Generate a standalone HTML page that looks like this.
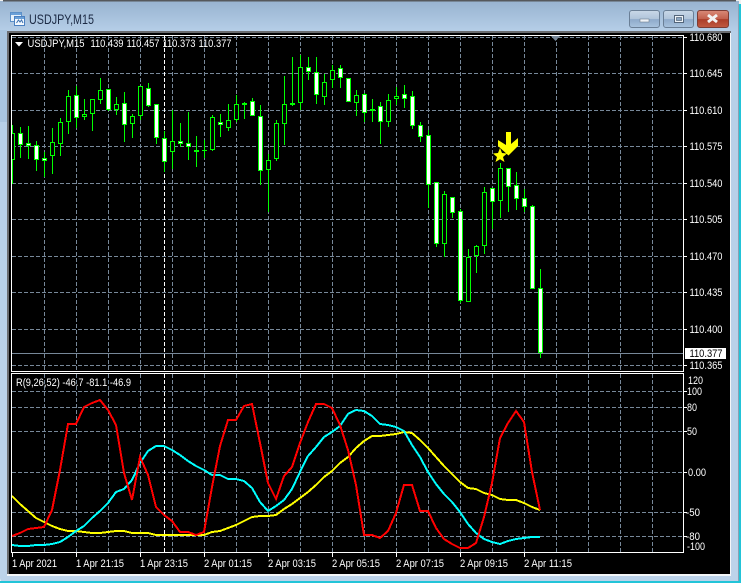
<!DOCTYPE html>
<html><head><meta charset="utf-8"><title>USDJPY,M15</title>
<style>
html,body{margin:0;padding:0;width:741px;height:583px;overflow:hidden;background:#fff}
svg{display:block}
text{font-family:"Liberation Sans",sans-serif;font-size:11px;fill:#fff}
</style></head><body>
<svg width="741" height="583" viewBox="0 0 741 583" xmlns="http://www.w3.org/2000/svg">
<defs>
<linearGradient id="t" x1="0" y1="0" x2="0" y2="1"><stop offset="0" stop-color="#98b3d0"/><stop offset="1" stop-color="#b6cfe8"/></linearGradient>
<linearGradient id="s" x1="0" y1="0" x2="0" y2="1"><stop offset="0" stop-color="#b6cfe8"/><stop offset="1" stop-color="#bcd3ea"/></linearGradient>
<linearGradient id="b" x1="0" y1="0" x2="0" y2="1"><stop offset="0" stop-color="#c9d8e8"/><stop offset=".5" stop-color="#afc4da"/><stop offset=".52" stop-color="#8eaaca"/><stop offset="1" stop-color="#a9c3de"/></linearGradient>
<linearGradient id="r" x1="0" y1="0" x2="0" y2="1"><stop offset="0" stop-color="#d98a78"/><stop offset=".5" stop-color="#c2604c"/><stop offset=".52" stop-color="#ab3c28"/><stop offset="1" stop-color="#c05a42"/></linearGradient>
<clipPath id="mc"><rect x="12" y="36" width="671" height="335"/></clipPath>
</defs>

<!-- window frame -->
<rect width="741" height="583" fill="#f0f0f0"/>
<rect x="0" y="1" width="739" height="581" rx="4" fill="url(#s)"/>
<rect x="0" y="1" width="739" height="31" fill="url(#t)"/>
<rect x="3" y="0" width="733" height="1.5" fill="#55585c"/>
<rect x="738" y="4" width="1" height="578" fill="#8aa0b4"/>
<rect x="739" y="4" width="2" height="579" fill="#22c4d8"/>
<rect x="0" y="581" width="741" height="2" fill="#22c4d8"/>
<rect x="0" y="30" width="7" height="92" fill="#a9c5e0"/>

<!-- icon -->
<g shape-rendering="crispEdges">
<rect x="10.500" y="12.500" width="11" height="9" fill="#e8f2fb" stroke="#5c90c8"/>
<rect x="11" y="13" width="10" height="2" fill="#6aa0d8"/>
<rect x="14.500" y="16.500" width="10" height="9" fill="#f4f9fe" stroke="#4a80c0"/>
<rect x="15" y="17" width="9" height="2" fill="#6aa0d8"/>
</g>
<path d="M16.500 23l2-3 1.500 2 1.500-2 1.500 3" fill="none" stroke="#3a70b0"/>

<text x="29" y="24" style="font-size:13.500px;fill:#1c2a44" textLength="65" lengthAdjust="spacingAndGlyphs">USDJPY,M15</text>

<!-- window buttons -->
<rect x="629.500" y="10.500" width="30" height="17" rx="2.500" fill="url(#b)" stroke="#6a7f96"/>
<rect x="640" y="19" width="9" height="3" fill="#eef3f8" stroke="#6e7f90" stroke-width=".6"/>
<rect x="663.500" y="10.500" width="30" height="17" rx="2.500" fill="url(#b)" stroke="#6a7f96"/>
<rect x="674.500" y="15.500" width="9" height="7" fill="#eef3f8" stroke="#53657a" />
<rect x="676.500" y="17.500" width="5" height="3" fill="#8ba6c2" stroke="#53657a" stroke-width=".7"/>
<rect x="697.500" y="10.500" width="31" height="17" rx="2.500" fill="url(#r)" stroke="#7c3c34"/>
<path d="M708 15l9 7m0-7l-9 7" stroke="#f2f2f2" stroke-width="3" fill="none"/>

<!-- client -->
<rect x="7" y="31" width="724" height="2" fill="#6a6c70"/>
<rect x="7" y="31" width="2" height="544" fill="#6a6c70"/>
<rect x="9" y="33" width="721" height="541" fill="#000"/>
<rect x="7" y="574" width="724" height="2" fill="#f4f6f8"/>
<rect x="730" y="33" width="1" height="543" fill="#f4f6f8"/>

<!-- grid -->
<g fill="none" stroke="#778899" stroke-dasharray="4 2" shape-rendering="crispEdges">
<path d="M12 37.500H683M12 73.500H683M12 110.500H683M12 146.500H683M12 183.500H683M12 219.500H683M12 256.500H683M12 292.500H683M12 329.500H683M12 365.500H683"/>
<path d="M44.500 36V371M76.500 36V371M108.500 36V371M140.500 36V371M172.500 36V371M204.500 36V371M236.500 36V371M268.500 36V371M300.500 36V371M332.500 36V371M364.500 36V371M396.500 36V371M428.500 36V371M460.500 36V371M492.500 36V371M524.500 36V371M556.500 36V371M588.500 36V371M620.500 36V371M652.500 36V371"/>
<path d="M12 391.500H683M12 407.500H683M12 431.500H683M12 472.500H683M12 512.500H683M12 536.500H683"/>
<path d="M44.500 374V552M76.500 374V552M108.500 374V552M140.500 374V552M172.500 374V552M204.500 374V552M236.500 374V552M268.500 374V552M300.500 374V552M332.500 374V552M364.500 374V552M396.500 374V552M428.500 374V552M460.500 374V552M492.500 374V552M524.500 374V552M556.500 374V552M588.500 374V552M620.500 374V552M652.500 374V552"/>
<path d="M164.500 36V371M164.500 374V552" stroke="#fff"/>
</g>

<!-- bid line -->
<rect x="12" y="353" width="671" height="1" fill="#778899"/>

<!-- candles -->
<g clip-path="url(#mc)" shape-rendering="crispEdges">
<path fill="none" stroke="#00ff00" d="M12.500 125V184M20.500 127V158M28.500 126V159M36.500 141V171M44.500 152V177M52.500 128V174M60.500 118V156M68.500 90V134M76.500 86V128M84.500 99V120M92.500 99V131M100.500 78V104M108.500 89V111M116.500 97V115M124.500 92V142M132.500 114V138M140.500 86V120M148.500 83V107M156.500 104V144M164.500 131V172M172.500 110V169M180.500 123V147M188.500 112V160M196.500 136V167M204.500 140V158M212.500 115V151M220.500 114V137M228.500 104V131M236.500 95V122M244.500 102V119M252.500 98V116M260.500 105V185M268.500 154V212M276.500 120V161M284.500 76V145M292.500 57V106M300.500 55V110M308.500 57V80M316.500 57V104M324.500 74V105M332.500 65V88M340.500 65V88M348.500 78V102M356.500 90V116M364.500 93V122M372.500 99V122M380.500 102V144M388.500 94V127M396.500 87V105M404.500 85V108M412.500 91V129M420.500 122V142M428.500 130V208M436.500 182V247M444.500 191V257M452.500 197V218M460.500 209V303M468.500 249V302M476.500 245V273M484.500 187V254M492.500 188V229M500.500 163V218M508.500 168V212M516.500 172V210M524.500 189V212M532.500 205V289M540.500 269V358"/>
<!-- hollow -->
<path fill="#000" stroke="#00ff00" d="M10.500 133.500h4V159.500h-4zM50.500 142.500h4V155.500h-4zM58.500 122.500h4V143.500h-4zM66.500 96.500h4V121.500h-4zM82.500 114.500h4V116.500h-4zM90.500 99.500h4V113.500h-4zM98.500 90.500h4V99.500h-4zM114.500 104.500h4V109.500h-4zM130.500 116.500h4V123.500h-4zM138.500 86.500h4V115.500h-4zM170.500 141.500h4V151.500h-4zM210.500 117.500h4V149.500h-4zM226.500 120.500h4V127.500h-4zM234.500 104.500h4V119.500h-4zM266.500 160.500h4V169.500h-4zM274.500 123.500h4V158.500h-4zM282.500 104.500h4V123.500h-4zM298.500 67.500h4V102.500h-4zM322.500 82.500h4V96.500h-4zM330.500 70.500h4V79.500h-4zM354.500 95.500h4V102.500h-4zM370.500 109.500h4V110.500h-4zM386.500 100.500h4V121.500h-4zM394.500 96.500h4V98.500h-4zM442.500 194.500h4V243.500h-4zM466.500 257.500h4V301.500h-4zM474.500 246.500h4V255.500h-4zM482.500 192.500h4V245.500h-4zM498.500 168.500h4V200.500h-4z"/>
<!-- white -->
<path fill="#fff" stroke="#00ff00" d="M18.500 133.500h4V144.500h-4zM26.500 143.500h4V145.500h-4zM34.500 145.500h4V159.500h-4zM42.500 158.500h4V160.500h-4zM74.500 95.500h4V117.500h-4zM106.500 89.500h4V109.500h-4zM122.500 103.500h4V124.500h-4zM146.500 88.500h4V105.500h-4zM154.500 104.500h4V137.500h-4zM162.500 138.500h4V161.500h-4zM178.500 141.500h4V143.500h-4zM186.500 143.500h4V146.500h-4zM218.500 122.500h4V124.500h-4zM250.500 101.500h4V115.500h-4zM258.500 116.500h4V170.500h-4zM306.500 67.500h4V71.500h-4zM314.500 72.500h4V94.500h-4zM338.500 68.500h4V77.500h-4zM346.500 78.500h4V101.500h-4zM362.500 94.500h4V112.500h-4zM378.500 106.500h4V121.500h-4zM402.500 94.500h4V98.500h-4zM410.500 96.500h4V125.500h-4zM418.500 125.500h4V136.500h-4zM426.500 135.500h4V184.500h-4zM434.500 182.500h4V243.500h-4zM450.500 197.500h4V212.500h-4zM458.500 211.500h4V300.500h-4zM490.500 188.500h4V201.500h-4zM506.500 168.500h4V186.500h-4zM514.500 185.500h4V198.500h-4zM522.500 198.500h4V206.500h-4zM530.500 206.500h4V288.500h-4zM538.500 288.500h4V352.500h-4z"/>
<!-- doji -->
<path fill="#00ff00" d="M194 150h5v2h-5zM202 150h5v1h-5zM242 103h5v2h-5zM290 103h5v2h-5z"/>
</g>

<!-- star & arrow -->
<polygon points="500,148 502,153 507,153.500 503,157 504.500,162 500,159.300 495.500,162 497,157 493,153.500 498,153" fill="#ffff00"/>
<polygon points="506,132 511,132 511,144 518,138 518,146 508.500,155.500 498,146 498,140 506,145" fill="#ffff00"/>

<!-- top markers -->
<polygon points="15,42 23,42 19,46.500" fill="#fff"/>
<polygon points="551,36 560,36 555.500,41" fill="#778899"/>

<!-- indicator lines -->
<g fill="none" stroke-width="2" stroke-linejoin="miter" shape-rendering="crispEdges">
<polyline stroke="#ffff00" points="12,496 20,504 28,511 36,518 44,522 52,526 60,529 68,531 76,531 84,532 92,533 100,533 108,532 116,531 124,531 132,533 140,533 148,533 156,535 164,535 172,535 180,535 188,535 196,535 204,535 212,532 220,531 228,528 236,525 244,521 252,517 260,516 268,516 276,515 284,509 292,504 300,498 308,492 316,485 324,477 332,471 340,463 348,457 356,448 364,441 372,436 380,436 388,435 396,434 404,432 412,433 420,440 428,448 436,457 444,466 452,474 460,482 468,488 476,489 484,493 492,495 500,499 508,500 516,500 524,503 532,507 540,510"/>
<polyline stroke="#00ffff" points="12,545 20,546 28,546 36,545 44,545 52,544 60,542 68,537 76,531 84,526 92,518 100,511 108,503 116,492 124,489 132,480 140,463 148,451 156,446 164,446 172,450 180,455 188,461 196,466 204,470 212,475 220,475 228,479 236,479 244,481 252,488 260,502 268,511 276,506 284,500 292,489 300,472 308,456 316,447 324,437 332,432 340,426 348,414 356,410 364,411 372,416 380,424 388,425 396,427 404,431 412,445 420,457 428,472 436,484 444,494 452,502 460,512 468,524 476,533 484,539 492,542 500,544 508,541 516,539 524,538 532,537 540,537"/>
<polyline stroke="#ff0000" points="12,536 20,533 28,529 36,528 44,527 52,510 60,470 68,424 76,424 84,407 92,403 100,400 108,410 116,425 124,473 132,500 140,457 148,475 156,507 164,515 172,521 180,532 188,532 196,535 204,532 212,487 220,446 228,420 236,420 244,406 252,404 260,443 268,483 276,499 284,476 292,467 300,443 308,422 316,404 324,404 332,408 340,425 348,450 356,485 364,535 372,535 380,538 388,531 396,513 404,485 412,485 420,511 428,511 436,528 444,539 452,544 460,548 468,548 476,543 484,517 492,483 500,438 508,423 516,411 524,422 532,472 540,510"/>
</g>

<!-- panel frames -->
<g fill="none" stroke="#fff" shape-rendering="crispEdges">
<rect x="11.500" y="35.500" width="672" height="336"/>
<rect x="11.500" y="373.500" width="672" height="179"/>
<path d="M684 37.500h3M684 73.500h3M684 110.500h3M684 146.500h3M684 183.500h3M684 219.500h3M684 256.500h3M684 292.500h3M684 329.500h3M684 365.500h3M684 391.500h3M684 407.500h3M684 431.500h3M684 472.500h3M684 512.500h3M684 536.500h3"/>
<path d="M12.500 553v4M76.500 553v4M140.500 553v4M204.500 553v4M268.500 553v4M332.500 553v4M396.500 553v4M460.500 553v4M524.500 553v4"/>
</g>

<!-- header -->
<text x="27.500" y="47" textLength="57" lengthAdjust="spacingAndGlyphs">USDJPY,M15</text>
<text x="90.500" y="47" textLength="33" lengthAdjust="spacingAndGlyphs">110.439</text>
<text x="126.500" y="47" textLength="33" lengthAdjust="spacingAndGlyphs">110.457</text>
<text x="162.500" y="47" textLength="33" lengthAdjust="spacingAndGlyphs">110.373</text>
<text x="198.500" y="47" textLength="33" lengthAdjust="spacingAndGlyphs">110.377</text>
<text x="16" y="386" textLength="115" lengthAdjust="spacingAndGlyphs">R(9,26,52) -46.7 -81.1 -46.9</text>

<!-- price axis -->
<text x="689.500" y="41" textLength="33" lengthAdjust="spacingAndGlyphs">110.680</text>
<text x="689.500" y="77" textLength="33" lengthAdjust="spacingAndGlyphs">110.645</text>
<text x="689.500" y="114" textLength="33" lengthAdjust="spacingAndGlyphs">110.610</text>
<text x="689.500" y="150" textLength="33" lengthAdjust="spacingAndGlyphs">110.575</text>
<text x="689.500" y="187" textLength="33" lengthAdjust="spacingAndGlyphs">110.540</text>
<text x="689.500" y="223" textLength="33" lengthAdjust="spacingAndGlyphs">110.505</text>
<text x="689.500" y="260" textLength="33" lengthAdjust="spacingAndGlyphs">110.470</text>
<text x="689.500" y="296" textLength="33" lengthAdjust="spacingAndGlyphs">110.435</text>
<text x="689.500" y="333" textLength="33" lengthAdjust="spacingAndGlyphs">110.400</text>
<text x="689.500" y="369" textLength="33" lengthAdjust="spacingAndGlyphs">110.365</text>
<rect x="685" y="348" width="41" height="11" fill="#fff"/>
<text x="689.500" y="357" textLength="33" lengthAdjust="spacingAndGlyphs" style="fill:#000">110.377</text>

<text x="688" y="384" textLength="15" lengthAdjust="spacingAndGlyphs">120</text>
<text x="687" y="395" textLength="15" lengthAdjust="spacingAndGlyphs">100</text>
<text x="687" y="411" textLength="10" lengthAdjust="spacingAndGlyphs">80</text>
<text x="687" y="435" textLength="10" lengthAdjust="spacingAndGlyphs">50</text>
<text x="688" y="476" textLength="18" lengthAdjust="spacingAndGlyphs">0.00</text>
<text x="686" y="516" textLength="14" lengthAdjust="spacingAndGlyphs">-50</text>
<text x="686" y="540" textLength="14" lengthAdjust="spacingAndGlyphs">-80</text>
<text x="687" y="550" textLength="18" lengthAdjust="spacingAndGlyphs">-100</text>

<!-- time axis -->
<text x="12" y="567" textLength="45" lengthAdjust="spacingAndGlyphs">1 Apr 2021</text>
<text x="76" y="567" textLength="48" lengthAdjust="spacingAndGlyphs">1 Apr 21:15</text>
<text x="140" y="567" textLength="48" lengthAdjust="spacingAndGlyphs">1 Apr 23:15</text>
<text x="204" y="567" textLength="48" lengthAdjust="spacingAndGlyphs">2 Apr 01:15</text>
<text x="268" y="567" textLength="48" lengthAdjust="spacingAndGlyphs">2 Apr 03:15</text>
<text x="332" y="567" textLength="48" lengthAdjust="spacingAndGlyphs">2 Apr 05:15</text>
<text x="396" y="567" textLength="48" lengthAdjust="spacingAndGlyphs">2 Apr 07:15</text>
<text x="460" y="567" textLength="48" lengthAdjust="spacingAndGlyphs">2 Apr 09:15</text>
<text x="524" y="567" textLength="48" lengthAdjust="spacingAndGlyphs">2 Apr 11:15</text>
</svg>
</body></html>
